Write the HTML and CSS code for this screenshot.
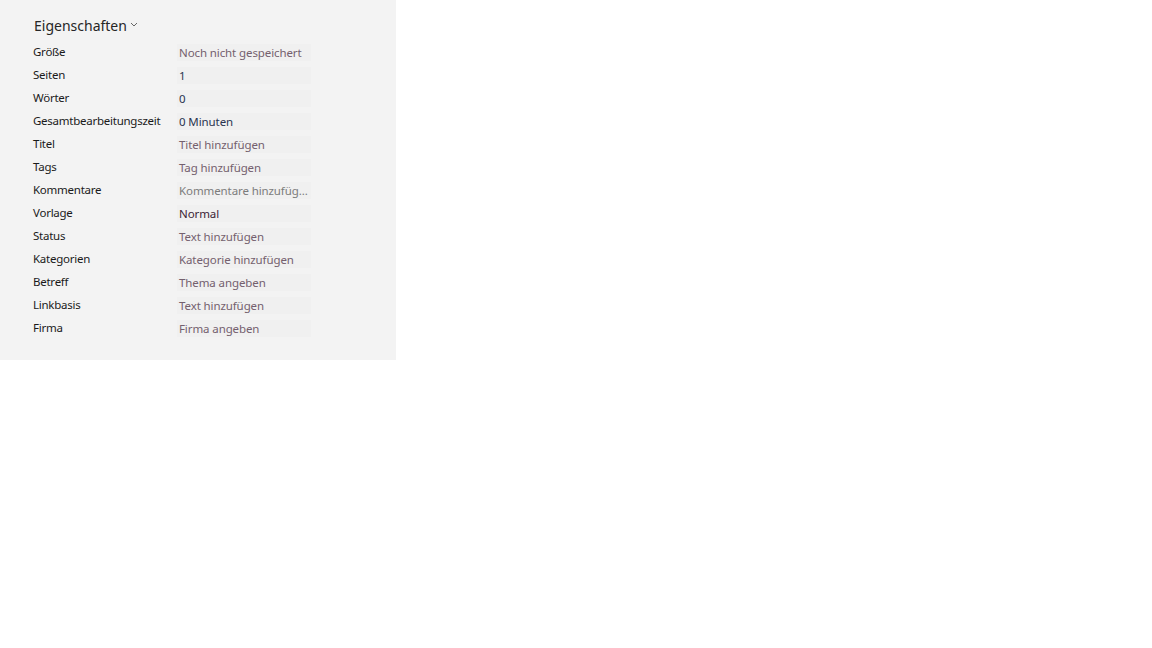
FILE: index.html
```html
<!DOCTYPE html>
<html lang="de">
<head>
    <meta charset="UTF-8">
    <title>Eigenschaften</title>
    <link rel="stylesheet" href="styles.css">
</head>
<body>
    <section class="props">
        <h2 class="props-title">Eigenschaften
            <svg class="chev" width="8" height="5" viewBox="0 0 8 5"><path d="M1 1 L4 4 L7 1" fill="none" stroke="#666" stroke-width="1"/></svg>
        </h2>
        <div class="props-list">
            <div class="row"><span class="label">Größe</span><span class="value hint">Noch nicht gespeichert</span></div>
            <div class="row"><span class="label">Seiten</span><span class="value num">1</span></div>
            <div class="row"><span class="label">Wörter</span><span class="value num">0</span></div>
            <div class="row"><span class="label">Gesamtbearbeitungszeit</span><span class="value num">0 Minuten</span></div>
            <div class="row"><span class="label">Titel</span><span class="value hint">Titel hinzufügen</span></div>
            <div class="row"><span class="label">Tags</span><span class="value hint">Tag hinzufügen</span></div>
            <div class="row"><span class="label">Kommentare</span><span class="value faint">Kommentare hinzufüg...</span></div>
            <div class="row"><span class="label">Vorlage</span><span class="value set">Normal</span></div>
            <div class="row"><span class="label">Status</span><span class="value hint">Text hinzufügen</span></div>
            <div class="row"><span class="label">Kategorien</span><span class="value hint">Kategorie hinzufügen</span></div>
            <div class="row"><span class="label">Betreff</span><span class="value hint">Thema angeben</span></div>
            <div class="row"><span class="label">Linkbasis</span><span class="value hint">Text hinzufügen</span></div>
            <div class="row"><span class="label">Firma</span><span class="value hint">Firma angeben</span></div>
        </div>
    </section>
</body>
</html>
```

FILE: styles.css
```css
body {
    margin: 0;
    background: #fff;
    font-family: "Noto Sans", "Open Sans", sans-serif;
}
.props {
    width: 396px;
    height: 360px;
    box-sizing: border-box;
    background: #f3f3f3;
    padding: 15px 0 0 33px;
}
.props-title {
    margin: 0 0 7px 1px;
    font-size: 14px;
    font-weight: normal;
    color: #262626;
    line-height: 22px;
    display: flex;
    align-items: center;
}
.chev {
    margin: -4px 0 0 3px;
}
.props-list {
    display: flex;
    flex-direction: column;
    gap: 6px;
}
.row {
    display: flex;
    align-items: center;
    height: 17px;
    font-size: 11.5px;
}
.label {
    width: 144px;
    color: #1a1a1a;
    letter-spacing: -0.25px;
    margin-top: -3px;
}
.value {
    width: 132px;
    height: 17px;
    line-height: 17px;
    padding-left: 2px;
    background: #f0f0f0;
    white-space: nowrap;
    overflow: hidden;
    letter-spacing: -0.1px;
}
.hint { color: #74606e; }
.num { color: #2a3550; }
.set { color: #3b2535; }
.faint { color: #7c7c7c; }
```
